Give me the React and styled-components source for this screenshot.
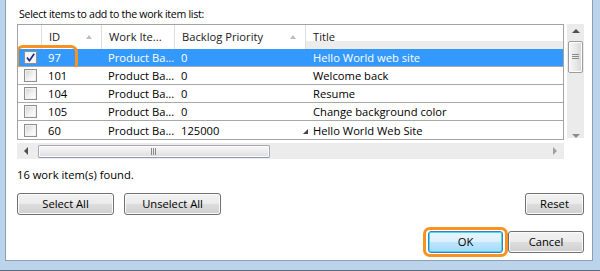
import React from "react";
import styled, { createGlobalStyle, css } from "styled-components";

const GlobalStyle = createGlobalStyle`
  html, body { margin: 0; padding: 0; background: #ffffff; }
  body { font-family: "Open Sans", "Noto Sans", sans-serif; font-size: 11.2px; color: #000; }
  * { box-sizing: border-box; }
`;

const ORANGE = "#f7931e";

const Frame = styled.div`
  width: 600px;
  height: 271px;
  background: #bcd3ec;
  padding: 0 7px 9px 5px;
  border-bottom: 1px solid #5a6a7c;
  display: flex;
`;

const Client = styled.div`
  flex: 1;
  background: #ffffff;
  border: 1px solid #8aa0b8;
  border-top: none;
  padding: 6px 8px 0 11px;
  display: flex;
  flex-direction: column;
`;

const Prompt = styled.div`
  line-height: 16px;
  height: 16px;
  margin-bottom: 2px;
  padding-left: 2px;
  font-size: 10.6px;
  letter-spacing: -0.3px;
  white-space: nowrap;
`;

const GridArea = styled.div`
  display: grid;
  grid-template-columns: 547px 18px;
  grid-template-rows: 116px 16px;
  column-gap: 2px;
  row-gap: 3px;
`;

const List = styled.div`
  border: 1px solid #a3a3a3;
  display: flex;
  flex-direction: column;
  overflow: hidden;
`;

const COLS = "23px 60px 73px 131px 1fr";

const HeaderRow = styled.div`
  display: grid;
  grid-template-columns: ${COLS};
  height: 24px;
`;

const HeaderCell = styled.div`
  display: flex;
  align-items: center;
  justify-content: space-between;
  padding: 0 9px 1px 7px;
  color: #1a1a1a;
  ${(p) => p.$sep && css`border-left: 1px solid #dedede;`}
  ${(p) => p.$band && css`box-shadow: inset 0 -8px 0 #ececec;`}
`;

const SortArrow = styled.span`
  width: 0;
  height: 0;
  border-left: 3.5px solid transparent;
  border-right: 3.5px solid transparent;
  border-bottom: 4px solid #bdbdbd;
  margin-top: 1px;
`;

const Row = styled.div`
  position: relative;
  display: grid;
  grid-template-columns: ${COLS};
  height: 18px;
  border-bottom: 1px solid #a8a8a8;
  background: ${(p) => (p.$selected ? "#3399ff" : "#ffffff")};
  color: ${(p) => (p.$selected ? "#ffffff" : "#000000")};
  &:last-child { border-bottom: none; }
`;

const Cell = styled.div`
  display: flex;
  align-items: center;
  padding-left: ${(p) => p.$pad ?? 7}px;
  white-space: nowrap;
  overflow: visible;
`;

const Box = styled.span`
  width: 13px;
  height: 13px;
  border: 1px solid #8e8f8f;
  background: linear-gradient(135deg, #d2d2d2 0%, #f4f4f4 60%, #ffffff 100%);
  box-shadow: inset 0 0 0 1px #f2f2f2;
  display: flex;
  align-items: center;
  justify-content: center;
  ${(p) => p.$checked && css`background: #f6f6f6;`}
`;

const Expander = styled.span`
  width: 0;
  height: 0;
  border-left: 5px solid transparent;
  border-bottom: 5px solid #454545;
  margin-left: -10px;
  margin-right: 5px;
  margin-top: 2px;
`;

const Ring = styled.span`
  position: absolute;
  pointer-events: none;
  border: 3px solid ${ORANGE};
  border-radius: 7px;
  ${(p) => css`
    left: ${p.$l}px;
    top: ${p.$t}px;
    width: ${p.$w}px;
    height: ${p.$h}px;
  `}
`;

const VScroll = styled.div`
  background: #ebebeb;
  border-left: 1px solid #ffffff;
  display: flex;
  flex-direction: column;
  align-items: center;
  padding-top: 5px;
  height: 114px;
`;

const HScroll = styled.div`
  background: #ececec;
  display: flex;
  align-items: center;
  padding: 0 7px 0 7px;
`;

const Arrow = styled.span`
  width: 0;
  height: 0;
  flex: none;
  ${(p) =>
    p.$dir === "up" &&
    css`
      border-left: 4px solid transparent;
      border-right: 4px solid transparent;
      border-bottom: 4px solid #505050;
    `}
  ${(p) =>
    p.$dir === "down" &&
    css`
      border-left: 4px solid transparent;
      border-right: 4px solid transparent;
      border-top: 4px solid #8c8c8c;
    `}
  ${(p) =>
    p.$dir === "left" &&
    css`
      border-top: 4px solid transparent;
      border-bottom: 4px solid transparent;
      border-right: 4px solid #505050;
    `}
  ${(p) =>
    p.$dir === "right" &&
    css`
      border-top: 4px solid transparent;
      border-bottom: 4px solid transparent;
      border-left: 4px solid #a0a0a0;
    `}
`;

const VThumb = styled.div`
  width: 15px;
  height: 32px;
  margin-top: 8px;
  border: 1px solid #9c9c9c;
  border-radius: 2px;
  background: linear-gradient(90deg, #f6f6f6 0%, #e9e9e9 50%, #d6d6d6 100%);
  box-shadow: inset 0 0 0 1px #fdfdfd;
  display: flex;
  align-items: center;
  justify-content: center;
`;

const HThumb = styled.div`
  width: 232px;
  height: 13px;
  margin-left: 10px;
  border: 1px solid #a7a7b0;
  border-bottom-color: #8f94b8;
  border-radius: 2px;
  background: linear-gradient(180deg, #f7f7f7 0%, #ececec 50%, #dcdcdc 100%);
  box-shadow: inset 0 0 0 1px #fdfdfd;
  display: flex;
  align-items: center;
  justify-content: center;
`;

const Spacer = styled.div`
  flex: 1;
`;

const Status = styled.div`
  margin-top: 8px;
  line-height: 16px;
  height: 16px;
`;

const ButtonRow = styled.div`
  display: flex;
  align-items: center;
  gap: ${(p) => p.$gap}px;
  margin-top: ${(p) => p.$top}px;
`;

const Button = styled.button`
  position: relative;
  font: inherit;
  color: #000;
  height: 22px;
  width: ${(p) => p.$w}px;
  padding: 0 0 1px;
  border: 1px solid #707070;
  border-radius: 3px;
  background: linear-gradient(180deg, #f2f2f2 0%, #ebebeb 48%, #dddddd 52%, #cfcfcf 100%);
  box-shadow: inset 0 0 0 1px #fbfbfb;
  ${(p) =>
    p.$default &&
    css`
      border-color: #3c7fb1;
      background: linear-gradient(180deg, #eaf6fd 0%, #d9f0fc 48%, #bee6fd 52%, #a7d9f5 100%);
      box-shadow: inset 0 0 0 1px #48d7fb;
    `}
`;

const FocusRing = styled.span`
  position: absolute;
  pointer-events: none;
  left: -6px;
  top: -5px;
  right: -6px;
  bottom: -5px;
  border: 3px solid ${ORANGE};
  border-radius: 7px;
`;

const Check = () => (
  <svg width="9" height="9" viewBox="0 0 9 9">
    <path d="M1 4.6 L3.4 7.8 L8.2 0.8" fill="none" stroke="#1f2f8a" strokeWidth="1.7" strokeLinejoin="round" />
  </svg>
);

const Grip = ({ vertical }) =>
  vertical ? (
    <svg width="7" height="6" viewBox="0 0 7 6">
      <path d="M0 0.5H7M0 2.5H7M0 4.5H7" stroke="#8a8a8a" strokeWidth="1" />
    </svg>
  ) : (
    <svg width="6" height="7" viewBox="0 0 6 7">
      <path d="M0.5 0V7M2.5 0V7M4.5 0V7" stroke="#8a8a8a" strokeWidth="1" />
    </svg>
  );

const rows = [
  { id: "97", type: "Product Ba...", pri: "0", title: "Hello World web site", checked: true, selected: true, ring: true },
  { id: "101", type: "Product Ba...", pri: "0", title: "Welcome back" },
  { id: "104", type: "Product Ba...", pri: "0", title: "Resume" },
  { id: "105", type: "Product Ba...", pri: "0", title: "Change background color" },
  { id: "60", type: "Product Ba...", pri: "125000", title: "Hello World Web Site", expander: true },
];

export default function App() {
  return (
    <>
      <GlobalStyle />
      <Frame>
        <Client>
          <Prompt>Select items to add to the work item list:</Prompt>
          <GridArea>
            <List>
              <HeaderRow>
                <HeaderCell />
                <HeaderCell $sep>
                  ID
                  <SortArrow />
                </HeaderCell>
                <HeaderCell $sep>Work Ite...</HeaderCell>
                <HeaderCell $sep>
                  Backlog Priority
                  <SortArrow />
                </HeaderCell>
                <HeaderCell $sep $band>Title</HeaderCell>
              </HeaderRow>
              {rows.map((r) => (
                <Row key={r.id} $selected={r.selected}>
                  <Cell $pad={6}>
                    <Box $checked={r.checked}>{r.checked && <Check />}</Box>
                  </Cell>
                  <Cell>{r.id}</Cell>
                  <Cell>{r.type}</Cell>
                  <Cell>{r.pri}</Cell>
                  <Cell $pad={8}>
                    {r.expander && <Expander />}
                    {r.title}
                  </Cell>
                  {r.ring && <Ring $l={-2} $t={-4} $w={62} $h={26} />}
                </Row>
              ))}
            </List>
            <VScroll>
              <Arrow $dir="up" />
              <VThumb>
                <Grip vertical />
              </VThumb>
              <Spacer />
              <Arrow $dir="down" />
            </VScroll>
            <HScroll>
              <Arrow $dir="left" />
              <HThumb>
                <Grip />
              </HThumb>
              <Spacer />
              <Arrow $dir="right" />
            </HScroll>
          </GridArea>
          <Status>16 work item(s) found.</Status>
          <ButtonRow $top={10} $gap={10}>
            <Button $w={97}>Select All</Button>
            <Button $w={97}>Unselect All</Button>
            <Spacer />
            <Button $w={59}>Reset</Button>
          </ButtonRow>
          <ButtonRow $top={16} $gap={5}>
            <Spacer />
            <Button $w={75} $default>
              OK
              <FocusRing />
            </Button>
            <Button $w={76}>Cancel</Button>
          </ButtonRow>
        </Client>
      </Frame>
    </>
  );
}
